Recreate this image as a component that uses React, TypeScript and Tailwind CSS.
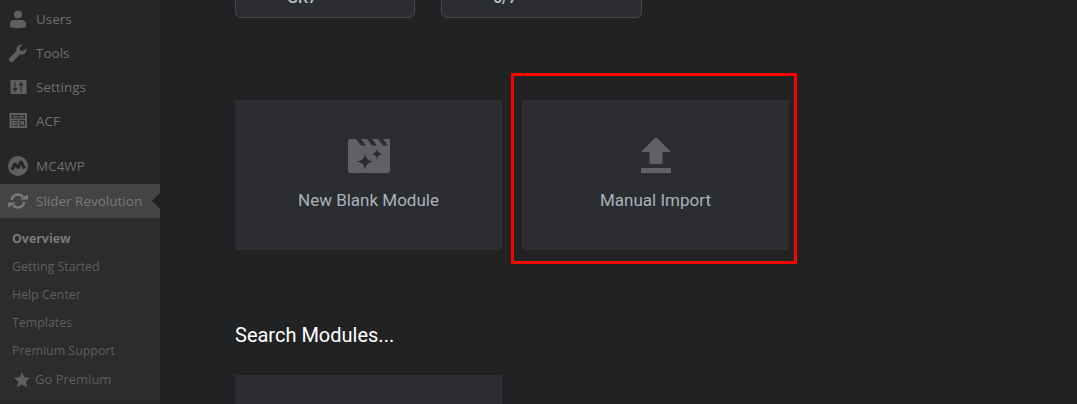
import React from "react";

const sans = "font-['Open_Sans','Noto_Sans',sans-serif]";

function UsersIcon() {
  return (
    <svg width="20" height="20" viewBox="0 0 20 20" fill="#5f5f5f">
      <circle cx="10" cy="5.500" r="4" />
      <path d="M2 18v-3.500c0-1.800 2.200-3.500 4-3.500h8c1.800 0 4 1.700 4 3.500V18c-2 .6-5 1-8 1s-6-.4-8-1z" />
    </svg>
  );
}
function ToolsIcon() {
  return (
    <svg width="20" height="20" viewBox="0 0 20 20" fill="#5f5f5f">
      <path d="M18.500 5.500c.3 1.800-.3 3.500-1.500 4.700-1.300 1.200-3.100 1.600-4.800 1.100L5.200 18.300c-1 1-2.500 1-3.500 0s-1-2.500 0-3.500l7-7c-.5-1.700-.1-3.500 1.100-4.800C11 1.800 12.700 1.200 14.500 1.500L11.500 4.500l.5 3 3 .5 3.500-2.500z" />
    </svg>
  );
}
function SettingsIcon() {
  return (
    <svg width="20" height="20" viewBox="0 0 20 20">
      <path fill="#5f5f5f" d="M2.500 3h16v14h-16z" />
      <path fill="#2a2a2a" d="M6.500 4.500h1v11h-1zM12.500 4.500h1v11h-1zM5 11h4v2H5zM11 6.500h4v2h-4z" />
    </svg>
  );
}
function AcfIcon() {
  return (
    <svg width="20" height="20" viewBox="0 0 20 20">
      <path fill="#5f5f5f" d="M1.500 2h17.500v15H1.500z" />
      <path fill="#2a2a2a" d="M3.500 4h13.500v3.500H3.500zM3.500 9h1.500v1H3.500zM6 9h4v1H6zM3.500 11.500h1.500v1H3.500zM6 11.500h4v1H6zM3.500 14h1.500v1H3.500zM6 14h4v1H6zM11.500 9H17v6h-5.500z" />
      <path fill="#5f5f5f" d="M5 5h5v1.500H5zM11 5h5v1.500h-5zM12.500 10H16v4h-3.500z" />
    </svg>
  );
}
function Mc4wpIcon() {
  return (
    <svg width="20" height="20" viewBox="0 0 20 20">
      <circle cx="10" cy="10" r="10" fill="#5f5f5f" />
      <path fill="none" stroke="#262626" strokeWidth="3" strokeLinejoin="bevel" d="M4 14 7 7.500l3 4.500 3-6.500 3.500 7" />
    </svg>
  );
}
function SliderIcon() {
  return (
    <svg width="20" height="20" viewBox="0 0 20 20" fill="#7a7a7a">
      <path fill="none" stroke="#7a7a7a" strokeWidth="2.500" d="M3.800 9C4.500 5.500 7 3.500 10 3.500c2 0 3.800 .9 5 2.400" />
      <path fill="none" stroke="#7a7a7a" strokeWidth="2.500" d="M16.200 11C15.500 14.500 13 16.500 10 16.500c-2 0-3.800-.9-5-2.400" />
      <path d="M11.500 8.500h8.500v-5zM8.500 11.500H0v5z" />
    </svg>
  );
}
function StarIcon() {
  return (
    <svg width="16" height="16" viewBox="0 0 16 16" fill="#5f5f5f">
      <path d="M8 0l2.400 5.200 5.600.6-4.100 3.800 1.100 5.600L8 12.400l-5 2.800 1.100-5.600L0 5.800l5.600-.6z" />
    </svg>
  );
}
function ClapperIcon() {
  return (
    <svg width="42" height="34" viewBox="0 0 42 34">
      <path fill="#5f6165" d="M3 0h39v31a3 3 0 0 1-3 3H3a3 3 0 0 1-3-3V3a3 3 0 0 1 3-3z" />
      <path fill="#2b2d31" d="M8 0h5l5 6.500h-5zM19 0h5l5 6.500h-5zM30 0h5l5 6.500h-5z" />
      <path fill="#2b2d31" d="M17 14.500c.8 4.500 2.500 6.800 8 8-5.500 1.200-7.200 3.500-8 8.500-.8-5-2.500-7.300-8-8.500 5.500-1.200 7.200-3.500 8-8z" />
      <path fill="#2b2d31" d="M29 9.500c.5 3.300 1.800 4.700 5.500 5.500-3.700.8-5 2.200-5.500 5.500-.5-3.300-1.800-4.700-5.500-5.500 3.700-.8 5-2.200 5.500-5.500z" />
    </svg>
  );
}
function UploadIcon() {
  return (
    <svg width="30" height="36" viewBox="0 0 30 36" fill="#5f6165">
      <path d="M15 0 30 15H21.500V27H8.500V15H0z" />
      <path d="M0 31h30v5H0z" />
    </svg>
  );
}

function NavItem({ icon, label, className = "" }: { icon: React.ReactNode; label: string; className?: string }) {
  return (
    <div className={`flex h-[34px] items-center pl-[8px] ${className}`}>
      <span className="flex w-[28px] shrink-0">{icon}</span>
      <span className="text-[13.5px] text-[#6f6f6f]">{label}</span>
    </div>
  );
}

function SubItem({ label, bold = false }: { label: string; bold?: boolean }) {
  return (
    <div className={`flex h-[28px] items-center pl-[12px] text-[12.4px] ${bold ? "font-bold text-[#7a7a7a]" : "text-[#5f5f5f]"}`}>
      {label}
    </div>
  );
}

function ActionCard({ icon, label }: { icon: React.ReactNode; label: string }) {
  return (
    <div className="flex h-[150px] w-[267px] flex-col items-center bg-[#2b2d31] pt-[37px]">
      <div className="flex h-[36px] items-end">{icon}</div>
      <div className="mt-[15px] text-[17px] leading-[24px] text-[#a9b2bc]">{label}</div>
    </div>
  );
}

function TopCard({ label, width }: { label: string; width: string }) {
  return (
    <div className={`flex h-[60px] items-end rounded-[6px] border border-[#45474b] bg-[#2b2d31] pb-[11px] pl-[51px] text-[16px] font-medium leading-[16px] text-[#b7c0ca] ${width}`}>
      {label}
    </div>
  );
}

export default function App() {
  return (
    <div className="relative flex h-[404px] w-[1077px] overflow-hidden bg-[#212224] font-['Roboto',sans-serif]">
      <aside className={`w-[160px] shrink-0 bg-[#262626] ${sans}`}>
        <NavItem icon={<UsersIcon />} label="Users" className="mt-[2px]" />
        <NavItem icon={<ToolsIcon />} label="Tools" />
        <NavItem icon={<SettingsIcon />} label="Settings" />
        <NavItem icon={<AcfIcon />} label="ACF" />
        <NavItem icon={<Mc4wpIcon />} label="MC4WP" className="mb-px mt-[11px]" />
        <div className="relative flex h-[34px] items-center bg-[#444444] pl-[8px]">
          <span className="flex w-[28px] shrink-0"><SliderIcon /></span>
          <span className="text-[13.5px] text-[#7a7a7a]">Slider Revolution</span>
          <span className="absolute right-0 top-[9px] h-0 w-0 border-y-[8px] border-r-[8px] border-y-transparent border-r-[#212224]" />
        </div>
        <div className="h-[183px] bg-[#2c2c2c] pt-[7px]">
          <SubItem label="Overview" bold />
          <SubItem label="Getting Started" />
          <SubItem label="Help Center" />
          <SubItem label="Templates" />
          <SubItem label="Premium Support" />
          <div className="flex h-[30px] items-center pl-[14px] text-[13px] text-[#5f5f5f]">
            <span className="mr-[5px] flex"><StarIcon /></span>
            Go Premium
          </div>
        </div>
      </aside>
      <main className="flex-1 pl-[75px]">
        <div className="-mt-[42px] flex gap-[26px]">
          <TopCard label="GR7" width="w-[180px]" />
          <TopCard label="6/7" width="w-[201px]" />
        </div>
        <div className="mt-[82px] flex gap-[20px]">
          <ActionCard icon={<ClapperIcon />} label="New Blank Module" />
          <ActionCard icon={<UploadIcon />} label="Manual Import" />
        </div>
        <h2 className="mt-[72px] text-[20px] font-normal leading-[26px] text-white">Search Modules...</h2>
        <div className="mt-[27px] h-[150px] w-[267px] bg-[#2b2d31]" />
      </main>
      <div className="absolute left-[511px] top-[73px] h-[191px] w-[286px] border-[3px] border-[#ff0000]" />
    </div>
  );
}
